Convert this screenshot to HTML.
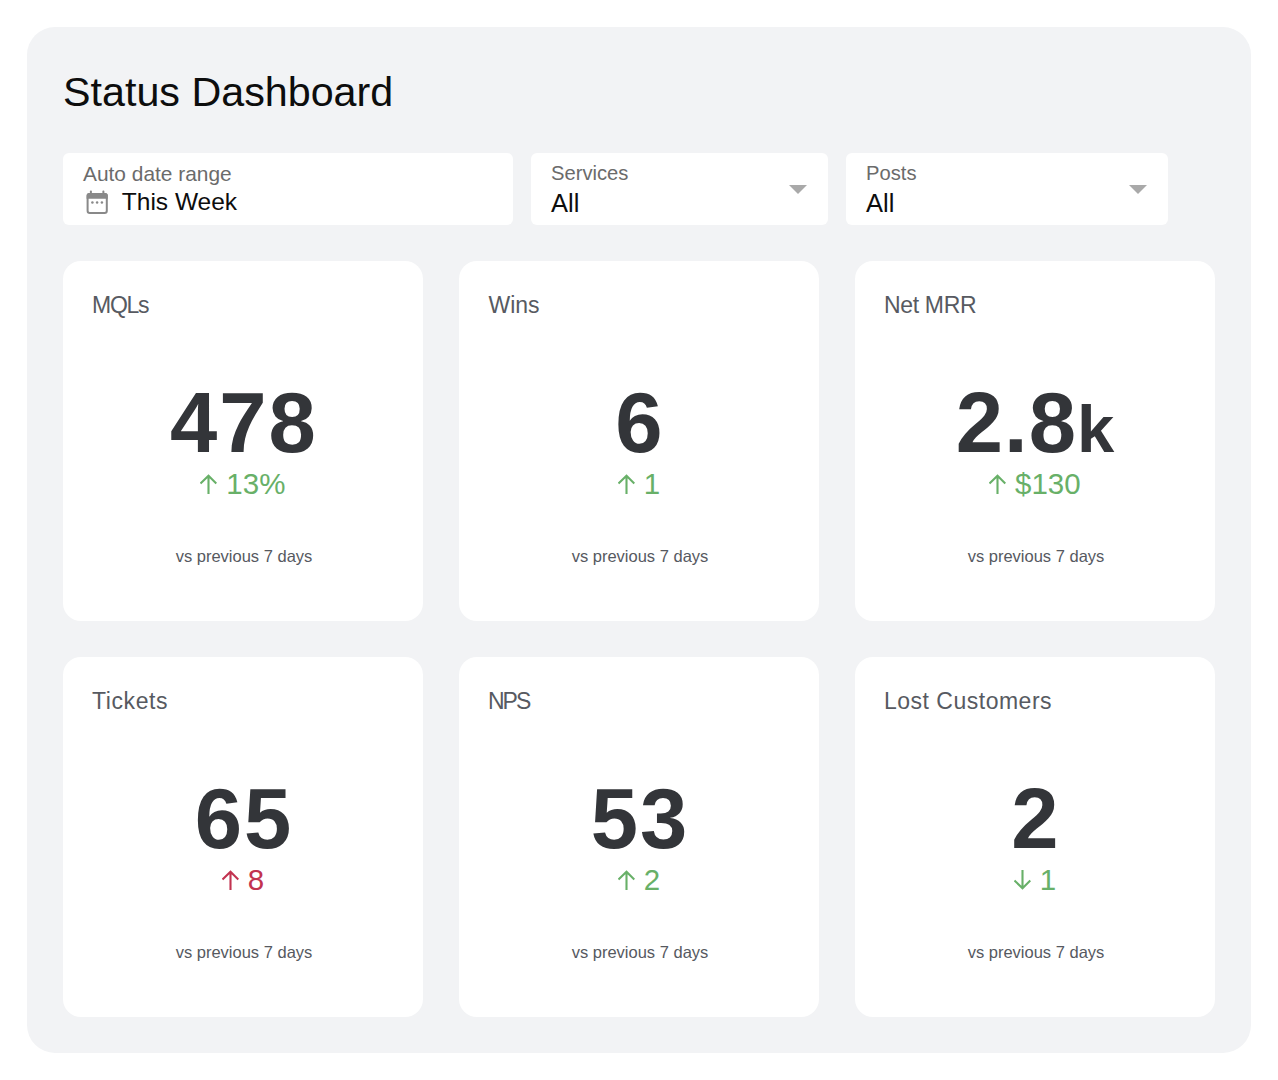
<!DOCTYPE html>
<html>
<head>
<meta charset="utf-8">
<style>
html,body{margin:0;padding:0;background:#fff;width:1278px;height:1080px;overflow:hidden;font-family:"Liberation Sans",sans-serif;}
.panel{position:absolute;left:27px;top:27px;width:1224px;height:1026px;background:#f2f3f5;border-radius:28px;}
.title{position:absolute;left:63px;top:67.7px;font-size:41.25px;line-height:48px;color:#0d0d0d;white-space:nowrap;}
.filt{position:absolute;top:153px;height:71.5px;background:#fff;border-radius:6px;}
.flab{position:absolute;left:20px;top:8.2px;font-size:20.2px;line-height:24px;color:#6b6b6b;white-space:nowrap;}
.fval{position:absolute;left:20px;top:35.3px;font-size:25.5px;line-height:30px;color:#0d0d0d;white-space:nowrap;}
.tri{position:absolute;top:32px;width:0;height:0;border-left:9px solid transparent;border-right:9px solid transparent;border-top:9px solid #a9a9a9;}
.card{position:absolute;width:360px;height:360px;background:#fff;border-radius:18px;}
.ctitle{position:absolute;left:28px;top:29px;font-size:23px;line-height:30px;color:#575a61;white-space:nowrap;}
.num{position:absolute;left:0;width:360px;text-align:center;top:113.8px;font-size:85px;letter-spacing:2px;text-indent:2px;line-height:96px;font-weight:bold;color:#333539;white-space:nowrap;}
.num small{font-size:67px;}
.chg{position:absolute;left:0;width:360px;text-align:center;top:204.5px;font-size:29.5px;line-height:36px;color:#68b068;white-space:nowrap;}
.chg.red{color:#c23350;}
.chg svg{display:inline-block;vertical-align:baseline;margin-right:8.7px;position:relative;left:-0.35px;}
.vs{position:absolute;left:1px;width:360px;text-align:center;top:282.7px;font-size:16.5px;line-height:24px;color:#56595f;white-space:nowrap;}
</style>
</head>
<body>
<div class="panel"></div>
<div class="title">Status Dashboard</div>

<div class="filt" style="left:63px;width:450px;">
  <div class="flab" style="font-size:20.9px;top:8.5px;">Auto date range</div>
  <svg style="position:absolute;left:23px;top:37px;" width="23" height="26" viewBox="0 0 23 26">
    <rect x="1.6" y="4" width="19.2" height="19" rx="2.2" fill="none" stroke="#898989" stroke-width="2"/>
    <path d="M0.6 5.5Q0.6 3 3.1 3H19.3Q21.8 3 21.8 5.5V8.8H0.6Z" fill="#898989"/>
    <rect x="3.9" y="0.6" width="2" height="4" rx="0.8" fill="#898989"/>
    <rect x="16.4" y="0.6" width="2" height="4" rx="0.8" fill="#898989"/>
    <circle cx="6.4" cy="12.5" r="1.25" fill="#898989"/>
    <circle cx="11.1" cy="12.5" r="1.25" fill="#898989"/>
    <circle cx="15.9" cy="12.5" r="1.25" fill="#898989"/>
  </svg>
  <div class="fval" style="left:58.8px;top:33.7px;font-size:24.5px;">This Week</div>
</div>

<div class="filt" style="left:531px;width:297px;">
  <div class="flab">Services</div>
  <div class="fval">All</div>
  <div class="tri" style="left:257.5px;"></div>
</div>

<div class="filt" style="left:846px;width:322px;">
  <div class="flab">Posts</div>
  <div class="fval">All</div>
  <div class="tri" style="left:282.5px;"></div>
</div>

<!-- row 1 -->
<div class="card" style="left:63px;top:261px;">
  <div class="ctitle" style="font-size:23px;letter-spacing:-1.25px;top:29px;left:29px;">MQLs</div>
  <div class="num">478</div>
  <div class="chg"><svg width="17" height="20" viewBox="0 0 17 20"><path d="M8.5 20V1.8M0.5 9.5L8.5 1.8L16.3 9.5" fill="none" stroke="currentColor" stroke-width="2.1"/></svg>13%</div>
  <div class="vs">vs previous 7 days</div>
</div>
<div class="card" style="left:459px;top:261px;">
  <div class="ctitle" style="font-size:23px;top:29px;left:29.5px;">Wins</div>
  <div class="num">6</div>
  <div class="chg"><svg width="17" height="20" viewBox="0 0 17 20"><path d="M8.5 20V1.8M0.5 9.5L8.5 1.8L16.3 9.5" fill="none" stroke="currentColor" stroke-width="2.1"/></svg>1</div>
  <div class="vs">vs previous 7 days</div>
</div>
<div class="card" style="left:855px;top:261px;">
  <div class="ctitle" style="font-size:23px;letter-spacing:-0.33px;top:29px;left:29px;">Net MRR</div>
  <div class="num" style="letter-spacing:1px;text-indent:1px;">2.8<small>k</small></div>
  <div class="chg"><svg width="17" height="20" viewBox="0 0 17 20"><path d="M8.5 20V1.8M0.5 9.5L8.5 1.8L16.3 9.5" fill="none" stroke="currentColor" stroke-width="2.1"/></svg>$130</div>
  <div class="vs">vs previous 7 days</div>
</div>

<!-- row 2 -->
<div class="card" style="left:63px;top:657px;">
  <div class="ctitle" style="font-size:23px;letter-spacing:0.6px;top:29px;left:29px;">Tickets</div>
  <div class="num">65</div>
  <div class="chg red"><svg width="17" height="20" viewBox="0 0 17 20"><path d="M8.5 20V1.8M0.5 9.5L8.5 1.8L16.3 9.5" fill="none" stroke="currentColor" stroke-width="2.1"/></svg>8</div>
  <div class="vs">vs previous 7 days</div>
</div>
<div class="card" style="left:459px;top:657px;">
  <div class="ctitle" style="font-size:23px;letter-spacing:-2px;top:29px;left:29px;">NPS</div>
  <div class="num">53</div>
  <div class="chg"><svg width="17" height="20" viewBox="0 0 17 20"><path d="M8.5 20V1.8M0.5 9.5L8.5 1.8L16.3 9.5" fill="none" stroke="currentColor" stroke-width="2.1"/></svg>2</div>
  <div class="vs">vs previous 7 days</div>
</div>
<div class="card" style="left:855px;top:657px;">
  <div class="ctitle" style="font-size:23px;letter-spacing:0.5px;top:29px;left:29px;">Lost Customers</div>
  <div class="num">2</div>
  <div class="chg"><svg width="17" height="20" viewBox="0 0 17 20"><path d="M8.5 0V18.2M0.5 10.5L8.5 18.2L16.3 10.5" fill="none" stroke="currentColor" stroke-width="2.1"/></svg>1</div>
  <div class="vs">vs previous 7 days</div>
</div>
</body>
</html>
